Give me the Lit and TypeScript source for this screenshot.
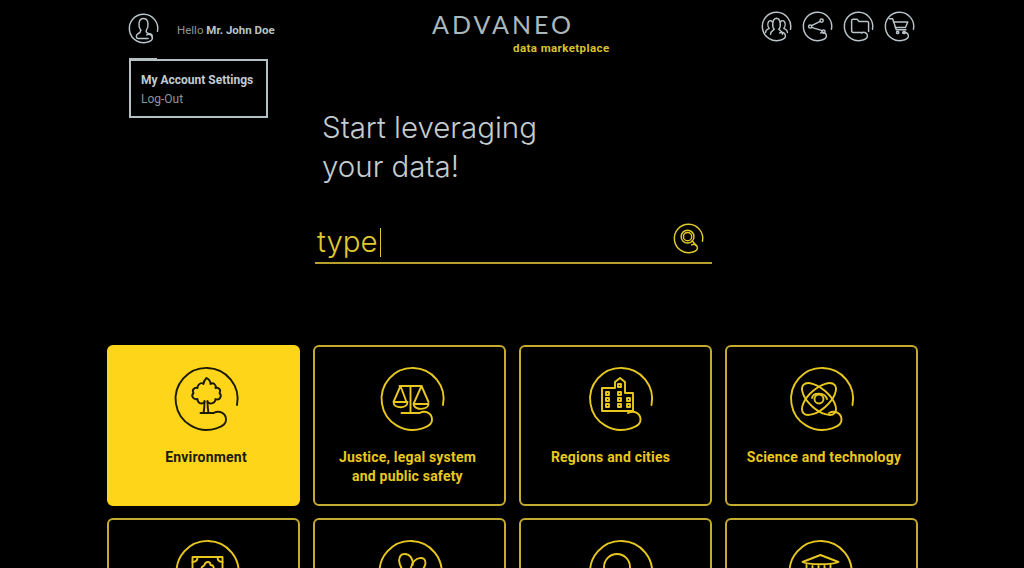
import { LitElement, html, css, svg } from "lit";
import { customElement } from "lit/decorators.js";

const RING = "M30.5 6A31 31 0 1 0 10 29.3C16 27.5 20 24 19.5 20C19 14 13 11 7 14";

function ring(inner: unknown, size = 72, cls = "", dx = 0) {
  return html`<svg class="ring ${cls}" style="transform: translateX(${dx}px)" width=${size} height=${size} viewBox="-36 -36 72 72">
    <path d=${RING}></path>${inner}
  </svg>`;
}

const tree = svg`
  <path d="M-6 14H7M-3 14C-2 9 -2 6 -2 2M2 14C1 9 1 6 1 2"></path>
  <path d="M-2 3C-5 6 -9 4 -9 0C-13 1 -16 -3 -13 -6C-15 -9 -12 -12 -9 -11C-9 -15 -5 -17 -3 -15C-3 -18 -1 -20 0 -21C2 -20 4 -18 4 -15C7 -17 10 -14 9 -11C12 -12 15 -9 13 -6C16 -3 13 2 9 0C9 4 4 6 1 3"></path>`;
const scales = svg`
  <path d="M-11 14H7M-2 14V-13M-13 -13H9"></path>
  <path d="M-12 -13L-19 3M-12 -13L-6 3M-19 3H-5C-5 10 -19 10 -19 3Z"></path>
  <path d="M9 -13L1 5M9 -13L16 3M1 5H16C16 11 2 12 1 5Z"></path>`;
const city = svg`
  <path d="M-19 12V-11H-6V-17L-1 -21L4 -17V-6H12V12Z"></path>
  <path d="M-15 -7h3v3h-3zM-3 -7h3v3h-3zM-15 -1h3v3h-3zM-3 -1h3v3h-3zM6 -1h3v3h-3zM-15 5h3v3h-3zM-3 5h3v3h-3zM6 5h3v3h-3zM-3 -15h3v3h-3z"></path>`;
const atom = svg`
  <circle cx="-3" cy="0" r="4.5"></circle>
  <path d="M-10 -1C-9 -7 3 -7 5 0"></path>
  <ellipse cx="-3" cy="0" rx="21" ry="10" transform="rotate(42 -3 0)"></ellipse>
  <ellipse cx="-3" cy="0" rx="21" ry="10" transform="rotate(-42 -3 0)"></ellipse>`;
const bill = svg`
  <path d="M-15 -15H15V9H-15Z"></path>
  <path d="M-15 -10C-12 -10 -10 -12 -10 -15M10 -15C10 -12 12 -10 15 -10"></path>
  <path d="M-6 -2C-7 -6 -3 -6 -3 -7C-2 -11 3 -11 3 -7C7 -7 7 -2 5 -1"></path>`;
const ribbon = svg`
  <path d="M-4 2C-14 -7 -13 -18 -6 -18C0 -18 3 -12 2 -7"></path>
  <path d="M1 -6C4 -15 15 -17 15 -9C15 -4 10 0 7 4C3 2 -1 -1 1 -6Z"></path>`;
const person = svg`<circle cx="-4" cy="-5" r="13"></circle>`;
const school = svg`
  <path d="M-18 -10L0 -17L18 -10C12 -7 -12 -7 -18 -10Z"></path>
  <path d="M-14 -7V0M-8 -6V0M-2 -6V0M4 -6V0M10 -7V0"></path>`;
const user = svg`
  <path d="M-6 4C-12 -4 -12 -22 0 -22C12 -22 12 -4 6 4C5 8 7 10 12 11C18 12 20 14 19 20"></path>
  <path d="M-6 4C-6 9 -9 10 -13 12C-17 15 -16 22 -12 22H10"></path>`;
const group = svg`
  <path d="M-24 13C-24 7 -19 6 -16 4C-19 0 -20 -7 -17 -11C-14 -14 -10 -13 -9 -10"></path>
  <path d="M24 13C24 7 19 6 16 4C19 0 20 -7 17 -11C14 -14 10 -13 9 -10"></path>
  <path d="M-13 17C-13 10 -7 9 -5 6C-10 1 -10 -17 0 -18C10 -17 10 1 5 6C7 9 13 10 13 17"></path>`;
const share = svg`
  <circle cx="-16" cy="0" r="3.5"></circle><circle cx="9" cy="-13" r="3.5"></circle><circle cx="13" cy="11" r="3.5"></circle>
  <path d="M-13 -2L6 -11M-13 2L10 9"></path>`;
const folder = svg`
  <path d="M-15 10V-13C-15 -15 -14 -16 -12 -16H-3L1 -11H19C21 -11 22 -10 22 -8V11"></path>
  <path d="M-15 10C-15 12 -14 13 -12 13H8"></path>`;
const cart = svg`
  <path d="M-22 -17H-15L-7 7H14"></path>
  <path d="M-13 -10H18L13 2H-9"></path>
  <circle cx="-4" cy="13" r="2.5"></circle><circle cx="10" cy="13" r="2.5"></circle>`;
const lens = svg`
  <circle cx="-2" cy="-4" r="14"></circle>
  <circle cx="-2" cy="-4" r="9"></circle>
  <path d="M8 5L17 16"></path>`;

interface Cat { label?: unknown; icon: unknown; on?: boolean; ix: number; lx?: number }
const cats: Cat[] = [
  { label: "Environment", icon: tree, on: true, ix: 2.5, lx: 2.5 },
  { label: html`Justice, legal system<br />and public safety`, icon: scales, ix: 2.5, lx: -2 },
  { label: "Regions and cities", icon: city, ix: 5, lx: -5 },
  { label: "Science and technology", icon: atom, ix: 0, lx: 2.5 },
  { icon: bill, ix: 3.5 },
  { icon: ribbon, ix: 0.5 },
  { icon: person, ix: 5 },
  { icon: school, ix: -1.5 },
];

@customElement("app-root")
export class AppRoot extends LitElement {
  static styles = css`
    :host {
      display: block;
      position: relative;
      width: 1024px;
      height: 568px;
      overflow: hidden;
      background: #000;
      font-family: Roboto, "Liberation Sans", sans-serif;
    }
    .ring { display: block; flex: none; fill: none; stroke: currentColor; stroke-width: 1.9; stroke-linecap: round; stroke-linejoin: round; overflow: visible; }
    .small { stroke-width: 3.2; }
    .header { display: flex; height: 59px; padding-left: 127px; padding-right: 108px; box-sizing: border-box; color: #b9c4c8; }
    .left { display: flex; align-items: flex-start; width: 305px; padding-top: 12px; box-sizing: border-box; }
    .hello { margin: 6px 0 0 17px; font-size: 11.5px; color: #8d9598; line-height: 24px; }
    .hello b { color: #b9c4c8; font-weight: 700; }
    .logo { width: 180px; }
    .logo .name { font-family: Lato, sans-serif; font-weight: 400; font-size: 25px; letter-spacing: 3px; line-height: 30px; margin-top: 9px; color: #a9b8bd; }
    .logo .sub { font-size: 11.5px; font-weight: 700; color: #d8c22e; line-height: 14px; margin: 2px 0 0 81px; white-space: nowrap; letter-spacing: .42px; }
    .actions { display: flex; gap: 8px; margin-left: auto; padding-top: 10px; }
    .menu { position: absolute; left: 129px; top: 59px; width: 139px; height: 59px; box-sizing: border-box; border: 2px solid #b4c0c4; padding: 10px 10px; font-size: 12px; line-height: 18.5px; color: #8d9598; }
    .menu::before { content: ""; position: absolute; left: -2px; top: -3px; width: 28px; height: 2px; background: #b4c0c4; }
    .menu b { display: block; color: #c3ccd0; font-weight: 700; }
    .hero { margin: 49px 0 0 322px; font-family: Inter, sans-serif; font-weight: 300; font-size: 29.5px; line-height: 38.5px; color: #c4cccf; }
    .search { display: flex; align-items: center; justify-content: space-between; box-sizing: border-box; width: 397px; height: 44px; margin: 35px 0 0 315px; padding: 0 7px 0 2px; border-bottom: 2px solid #b89f2e; color: #e0c92e; font-family: Inter, sans-serif; font-weight: 300; font-size: 29.5px; }
    .search .ring { margin-bottom: 6px; }
    .caret { display: inline-block; width: 1.5px; height: 29px; margin-left: 2px; background: #e0c92e; vertical-align: -5px; }
    .grid { display: grid; grid-template-columns: repeat(4, 193px); gap: 12px 13px; margin: 81px 0 0 107px; }
    .card { box-sizing: border-box; height: 161px; border: 2px solid #c4ab2e; border-radius: 6px; padding-top: 16px; display: flex; flex-direction: column; align-items: center; color: #e8c81e; }
    .card.on { background: #fed518; border-color: #fed518; color: #1b1a08; }
    .label { margin-top: 13px; font-weight: 700; font-size: 14px; line-height: 19px; letter-spacing: .2px; text-align: center; white-space: nowrap; }
  `;

  render() {
    return html`
      <div class="header">
        <div class="left">
          ${ring(user, 33, "small")}
          <div class="hello">Hello <b>Mr. John Doe</b></div>
        </div>
        <div class="logo">
          <div class="name">ADVANEO</div>
          <div class="sub">data marketplace</div>
        </div>
        <div class="actions">
          ${[group, share, folder, cart].map((i) => ring(i, 33, "small"))}
        </div>
      </div>
      <div class="menu"><b>My Account Settings</b>Log-Out</div>
      <div class="hero">Start leveraging<br />your data!</div>
      <div class="search">
        <span>type<i class="caret"></i></span>
        ${ring(lens, 33, "small")}
      </div>
      <div class="grid">
        ${cats.map((c) => html`
          <div class="card ${c.on ? "on" : ""}">
            ${ring(c.icon, 72, "", c.ix)}
            ${c.label ? html`<div class="label" style="transform: translateX(${c.lx}px)">${c.label}</div>` : ""}
          </div>`)}
      </div>
    `;
  }
}
